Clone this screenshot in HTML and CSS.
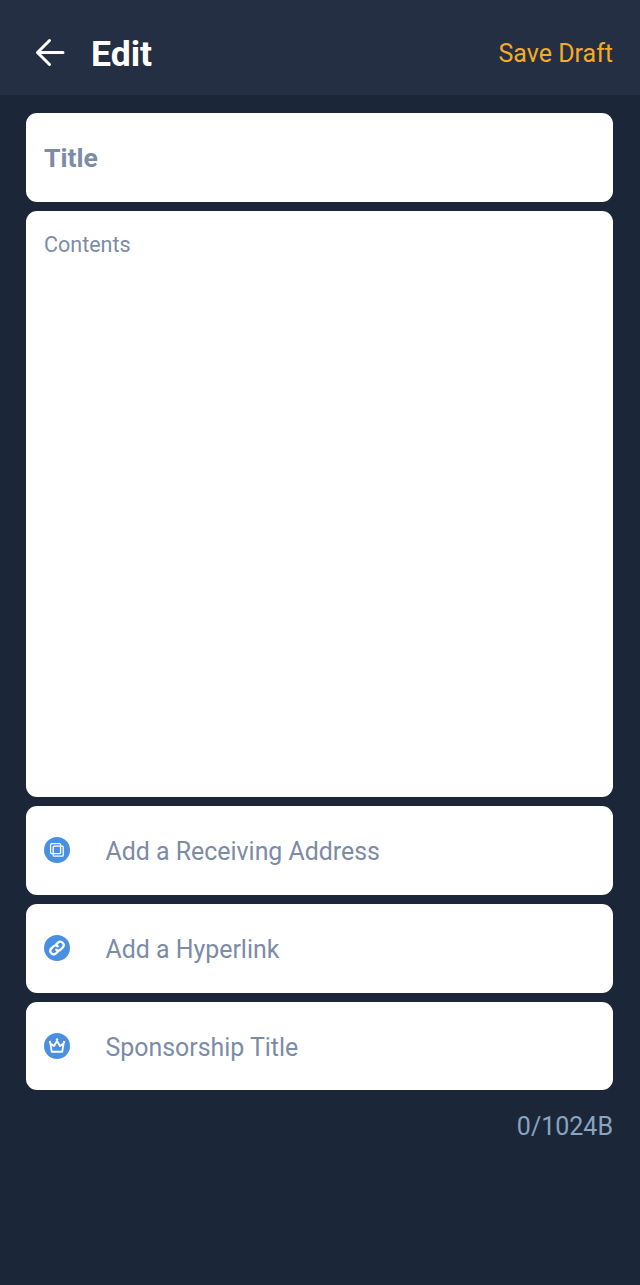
FILE: index.html
```html
<!DOCTYPE html>
<html lang="en">
<head>
<meta charset="utf-8">
<title>Edit</title>
<link rel="stylesheet" href="styles.css">
</head>
<body>
<header class="topbar">
  <svg class="back" width="30" height="30" viewBox="0 0 30 30" fill="none" stroke="#fff" stroke-width="3" stroke-linecap="round" stroke-linejoin="round"><path d="M2.5 14.5H28M14.5 2.5 2.5 14.5 14.5 26.5"/></svg>
  <h1 class="heading">Edit</h1>
  <span class="save">Save Draft</span>
</header>
<main class="form">
  <div class="card title-card">Title</div>
  <div class="card contents-card">Contents</div>
  <div class="card row">
    <svg class="icon" viewBox="0 0 26 26"><circle cx="13" cy="13" r="13" fill="#4a90e2"/><g fill="none" stroke="#fff" stroke-width="1.3"><rect x="6.6" y="6.6" width="10" height="10" rx="1"/><rect x="9.2" y="9.2" width="10" height="10" rx="1"/></g></svg>
    <span>Add a Receiving Address</span>
  </div>
  <div class="card row">
    <svg class="icon" viewBox="0 0 26 26"><circle cx="13" cy="13" r="13" fill="#4a90e2"/><g fill="none" stroke="#fff" stroke-width="2.2" stroke-linecap="round"><path d="M12.2 9.4 14 7.6a3.4 3.4 0 0 1 4.8 4.8l-2 2a3.4 3.4 0 0 1-4.6.2"/><path d="M13.8 16.6 12 18.4a3.4 3.4 0 0 1-4.8-4.8l2-2a3.4 3.4 0 0 1 4.6-.2"/></g></svg>
    <span>Add a Hyperlink</span>
  </div>
  <div class="card row row-last">
    <svg class="icon" viewBox="0 0 26 26"><circle cx="13" cy="13" r="13" fill="#4a90e2"/><g fill="none" stroke="#fff" stroke-width="1.9" stroke-linejoin="round"><path d="M7.8 18.8 6.4 10.4 10 13 13 8 16 13 19.6 10.4 18.2 18.8Z"/></g><g fill="#fff"><circle cx="6" cy="9" r="1.2"/><circle cx="13" cy="6.4" r="1.2"/><circle cx="20" cy="9" r="1.2"/></g></svg>
    <span>Sponsorship Title</span>
  </div>
  <div class="counter">0/1024B</div>
</main>
</body>
</html>
```
FILE: styles.css
```css
* { box-sizing: border-box; }
html, body { margin: 0; height: 100%; }
body {
  background: #1b2738;
  font-family: Roboto, "Liberation Sans", sans-serif;
  min-height: 1285px;
}
.topbar {
  height: 95px;
  background: #242f44;
  display: flex;
  align-items: center;
  padding: 12px 27px 0 35px;
}
.back { flex: none; margin-top: -1px; }
.heading {
  margin: 0 0 0 26px;
  font-size: 35.5px;
  font-weight: 700;
  color: #fff;
  flex: 1;
}
.save { font-size: 25px; color: #f5ab23; }
.form {
  padding: 18px 27px 0 26px;
  display: flex;
  flex-direction: column;
  gap: 9px;
}
.card {
  background: #fff;
  border-radius: 11px;
  padding-left: 18px;
}
.title-card {
  height: 89px;
  display: flex;
  align-items: center;
  font-size: 26.5px;
  font-weight: 700;
  color: #7c8ba6;
}
.contents-card {
  height: 586px;
  padding-top: 21px;
  font-size: 21.5px;
  line-height: 26px;
  color: #7c8ba6;
}
.row {
  height: 89px;
  display: flex;
  align-items: center;
  padding-top: 2px;
  font-size: 24.9px;
  line-height: 30px;
  color: #7c8ba6;
}
.row-last { height: 88px; padding-top: 3px; }
.icon { width: 26px; height: 26px; margin-right: 35.5px; flex: none; margin-top: -3px; }
.counter {
  text-align: right;
  font-size: 25px;
  color: #8aa3bf;
  padding-top: 13px;
  line-height: 30px;
}
```
